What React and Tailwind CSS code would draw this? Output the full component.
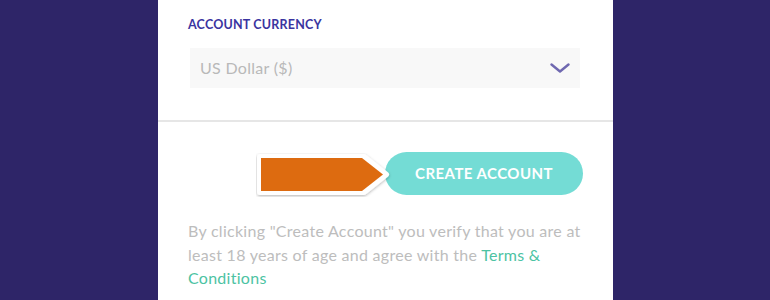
import React from "react";

export default function App() {
  return (
    <div
      className="w-[770px] h-[300px] overflow-hidden bg-[#2e2568] flex"
      style={{ fontFamily: "Lato, 'Open Sans', sans-serif" }}
    >
      <div className="ml-[158px] w-[455px] h-[300px] bg-white flex flex-col">
        <div className="pl-[30px] pr-[33px] pt-[17px] h-[120px]">
          <div className="text-[12.5px] leading-[16px] font-bold tracking-[0.2px] text-[#3a34a0]">
            ACCOUNT CURRENCY
          </div>
          <div className="mt-[15px] ml-[2px] h-[40px] bg-[#f8f8f8] flex items-center justify-between pl-[10px] pr-[10px]">
            <span className="text-[16px] text-[#b9b9b9] tracking-[0.3px]">US Dollar ($)</span>
            <svg width="20" height="10" viewBox="0 0 20 10">
              <path d="M1.5 1.5 L10 8.5 L18.5 1.5" fill="none" stroke="#6f68b0" strokeWidth="2.4" strokeLinecap="round" strokeLinejoin="round" />
            </svg>
          </div>
        </div>
        <div className="h-[2px] bg-[#e6e6e6]"></div>
        <div className="pl-[30px] pr-[14px] pt-[30px]">
          <div className="flex items-center h-[43px]">
            <div className="ml-[70px] relative w-[132px] h-[42px]">
              <svg width="136" height="44" viewBox="0 0 136 44" className="absolute left-[-2px] top-[0px]">
                <defs>
                  <filter id="sh" x="-10%" y="-20%" width="120%" height="150%">
                    <feDropShadow dx="0" dy="1" stdDeviation="1.6" floodColor="#000" floodOpacity="0.3" />
                  </filter>
                </defs>
                <path d="M4 4 L108 4 L130 21.5 L108 39 L4 39 Z" fill="#ffffff" stroke="#ffffff" strokeWidth="6" strokeLinejoin="round" filter="url(#sh)" />
                <path d="M5 5 L106 5 L127 21.5 L106 38 L5 38 Z" fill="#dd6b10" />
              </svg>
            </div>
            <button className="ml-[-5px] w-[198px] h-[43px] rounded-full bg-[#74dcd5] text-white font-bold text-[15px] tracking-[0.45px] flex items-center justify-center">
              CREATE ACCOUNT
            </button>
          </div>
          <p className="mt-[24px] w-[405px] text-[16px] leading-[23.5px] text-[#bdbdbd] tracking-[0.28px]">
            By clicking "Create Account" you verify that you are at least 18 years of age and agree with the{" "}
            <span className="text-[#4cc3a3]">Terms &amp; Conditions</span>
          </p>
        </div>
      </div>
    </div>
  );
}
